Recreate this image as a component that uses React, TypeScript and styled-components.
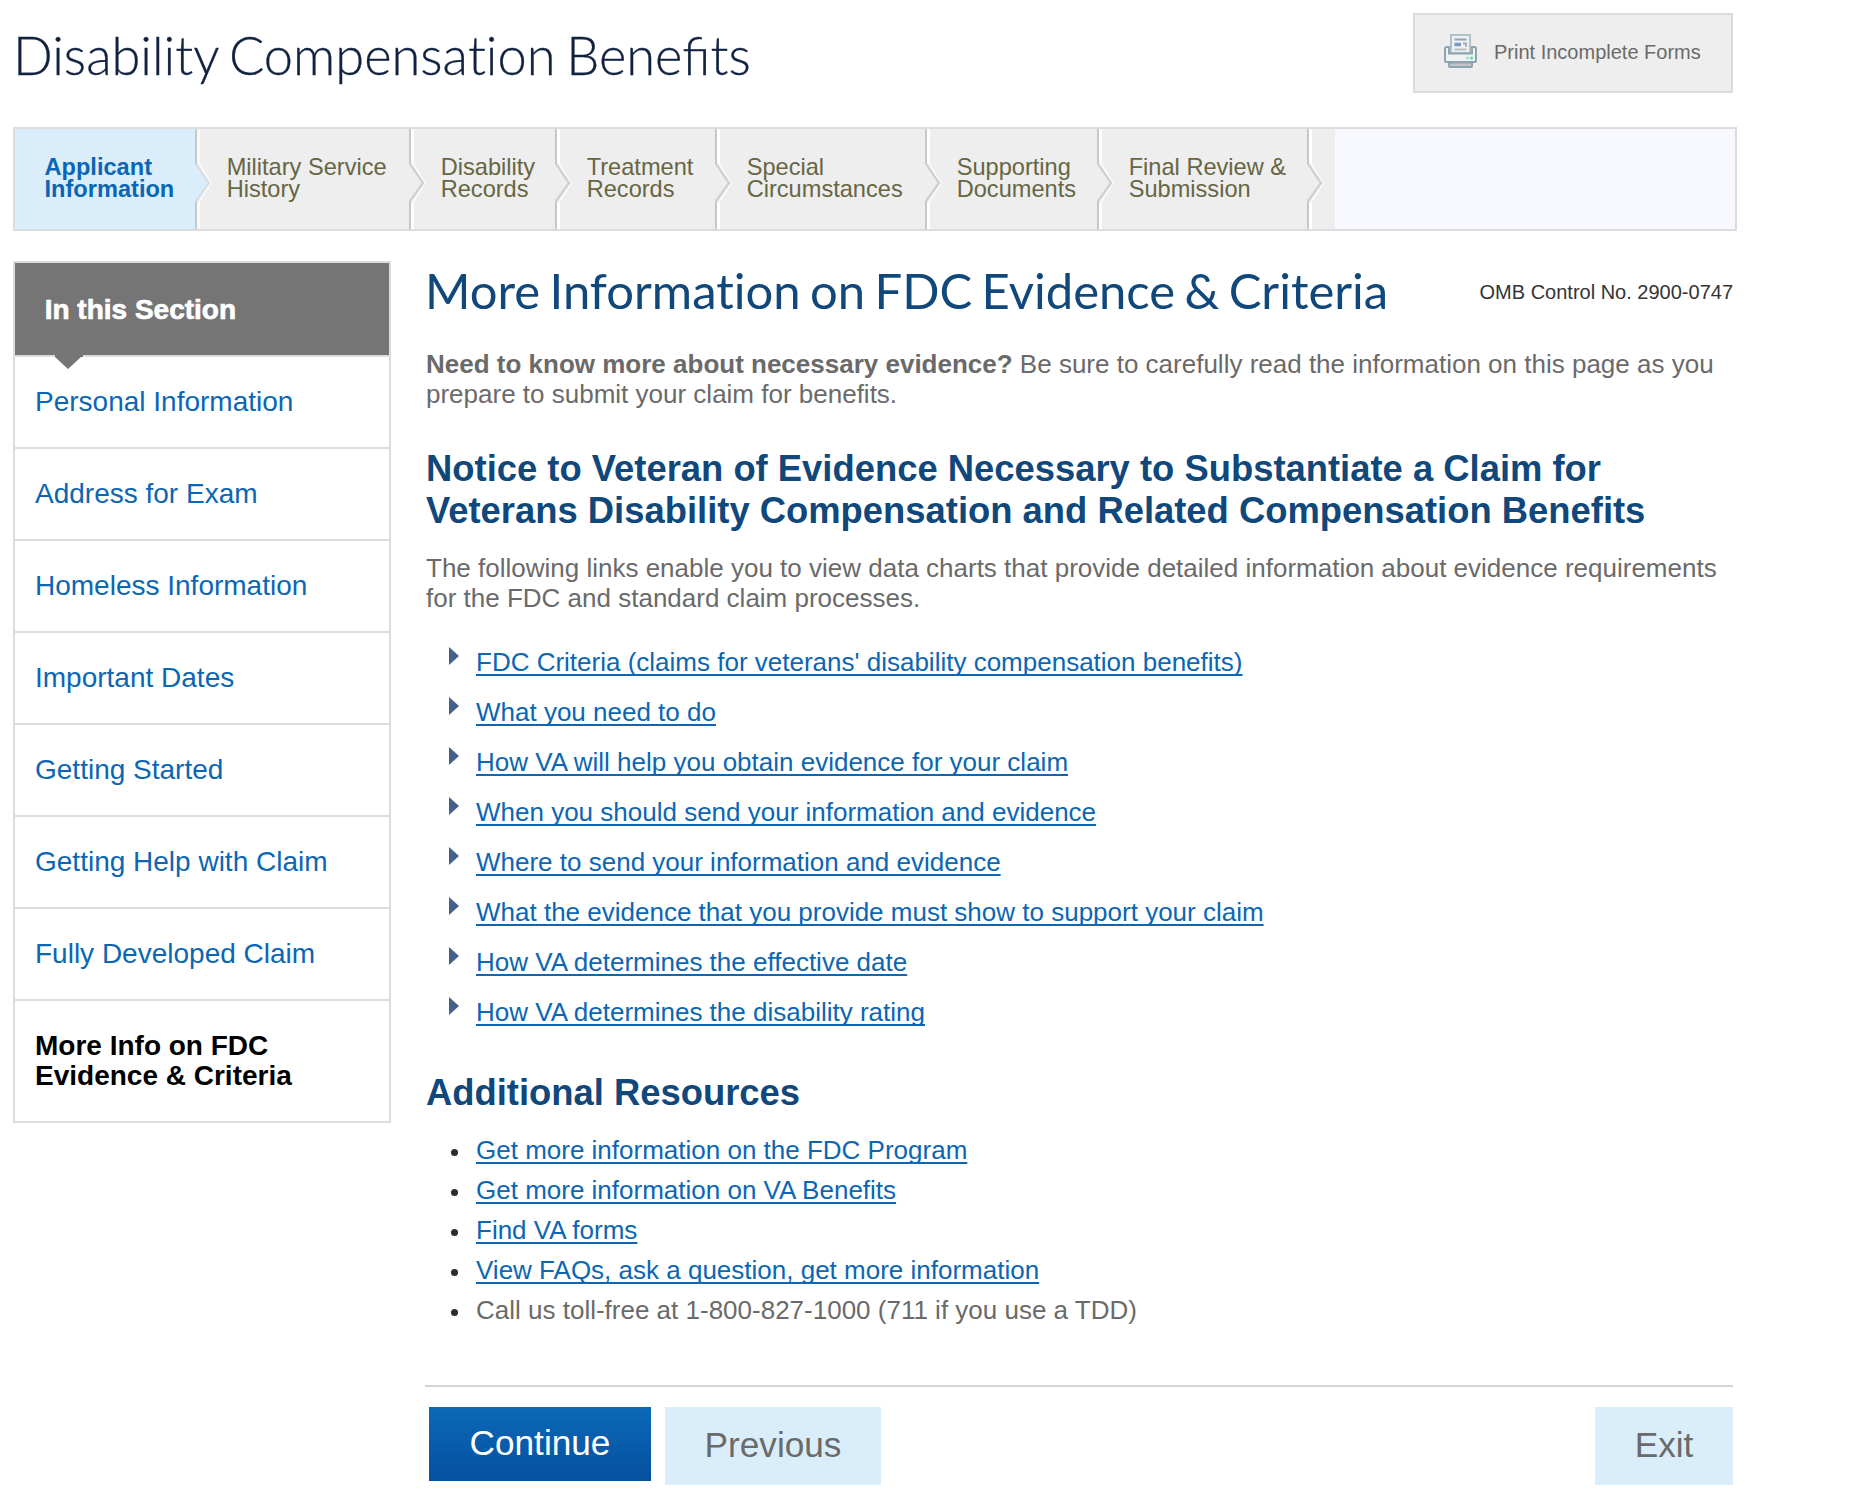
import React from "react";
import styled, { createGlobalStyle, css } from "styled-components";

const color = {
  line: "#dcdcdc",
  panel: "#eeeeee",
  sky: "#daedfb",
  link: "#0b66b4",
  text: "#6a6a6a",
  navy: "#10487b",
};

const sans = '"Liberation Sans", Arial, sans-serif';
const display = 'Lato, "Liberation Sans", sans-serif';

const GlobalStyle = createGlobalStyle`
  * { box-sizing: border-box; }
  body { margin: 0; background: #fff; font-family: ${sans}; color: ${color.text}; }
  h1, h2, h3, p, ul { margin: 0; padding: 0; font-size: inherit; font-weight: inherit; }
  ul { list-style: none; }
`;

const Page = styled.div`
  width: 1737px;
  padding: 13px 0 18px 13px;
`;

const Header = styled.header`
  display: flex;
  justify-content: space-between;
  height: 80px;
  margin-right: 4px;
`;

const Title = styled.h1`
  padding-top: 2px;
  font: 300 52.4px/80px ${display};
  word-spacing: -3.5px;
  color: #10223f;
  -webkit-text-stroke: 0.3px #10223f;
`;

const Plain = styled.span`
  font-variant-ligatures: none;
`;

const PrintButton = styled.a`
  display: flex;
  align-items: center;
  gap: 17px;
  width: 320px;
  padding: 0 0 2px 29px;
  border: 2px solid ${color.line};
  background: ${color.panel};
  font-size: 20px;
  line-height: 24px;
`;

const PrinterSvg = styled.svg`
  display: block;
  margin-bottom: 2px;
`;

const Steps = styled.nav`
  display: flex;
  height: 104px;
  margin-top: 34px;
  border: 2px solid ${color.line};
  background: #f8f9ff;
`;

const Step = styled.div<{ $width: number; $active?: boolean }>`
  flex: none;
  display: flex;
  width: ${(p) => p.$width}px;
  background: ${(p) => (p.$active ? color.sky : color.panel)};
  color: ${(p) => (p.$active ? color.link : "#666644")};
  font-size: 23.6px;
  font-weight: ${(p) => (p.$active ? 700 : 400)};
  line-height: 22px;
  white-space: pre-line;
`;

const StepLabel = styled.span<{ $first?: boolean }>`
  padding: 27px 0 0 ${(p) => (p.$first ? 29.5 : 13.7)}px;
`;

const StepsEnd = styled.div`
  width: 28px;
  background: ${color.panel};
`;

const Columns = styled.div`
  display: flex;
  align-items: flex-start;
  gap: 34px;
  margin: 30px 4px 0 0;
`;

const Sidebar = styled.aside`
  flex: none;
  width: 378px;
  border: 2px solid ${color.line};
  font-size: 28px;
  line-height: 30px;
`;

const SidebarHead = styled.h2`
  position: relative;
  height: 92px;
  padding: 32px 0 0 29.7px;
  background: #757575;
  color: #fff;
  font-weight: 700;
  -webkit-text-stroke: 0.7px #fff;
  &::after {
    content: "";
    position: absolute;
    left: 40px;
    top: 100%;
    width: 28px;
    height: 14px;
    background: #757575;
    clip-path: polygon(0 0, 100% 0, 100% 2px, 26px 2px, 13px 100%, 0 2px);
  }
`;

const SidebarItem = styled.a<{ $current?: boolean }>`
  display: block;
  padding: 30px 60px 30px 20px;
  border-top: 2px solid ${color.line};
  color: ${color.link};
  ${(p) =>
    p.$current &&
    css`
      color: #000;
      font-weight: 700;
    `}
`;

const Main = styled.main`
  flex: 1;
  font-size: 26px;
  line-height: 30px;
`;

const Headline = styled.div`
  display: flex;
  justify-content: space-between;
  height: 58px;
  margin-bottom: 30px;
`;

const PageTitle = styled.h2`
  font: 400 49px/58px ${display};
  font-variant-ligatures: none;
  word-spacing: -3.2px;
  color: ${color.navy};
`;

const ControlNumber = styled.span`
  padding-top: 19px;
  font-size: 20px;
  line-height: 24px;
  color: #333;
`;

const Paragraph = styled.p`
  padding-left: 1px;
`;

const SubHeading = styled.h3<{ $top: number }>`
  margin: ${(p) => p.$top}px 0 21px;
  padding-left: 1px;
  font-size: 36.4px;
  font-weight: 700;
  line-height: 42px;
  color: ${color.navy};
`;

const Link = styled.a`
  color: ${color.link};
  text-decoration: underline;
  text-decoration-thickness: 2px;
  text-underline-offset: 3px;
  text-decoration-skip-ink: none;
`;

const TopicList = styled.ul`
  display: flex;
  flex-direction: column;
  gap: 20px;
  margin-top: 34px;
`;

const Topic = styled.li`
  display: flex;
  gap: 17px;
  padding-left: 24px;
  &::before {
    content: "";
    width: 10px;
    height: 18px;
    background: #44608f;
    clip-path: polygon(0 0, 100% 50%, 0 100%);
  }
`;

const ResourceList = styled.ul`
  display: flex;
  flex-direction: column;
  gap: 10px;
`;

const Resource = styled.li`
  display: flex;
  gap: 18px;
  padding-left: 26px;
  &::before {
    content: "";
    width: 7px;
    height: 7px;
    margin-top: 14px;
    border-radius: 50%;
    background: #2c2c2c;
  }
`;

const Actions = styled.footer`
  display: flex;
  align-items: flex-start;
  gap: 14px;
  margin-top: 60px;
  padding: 20px 0 0 4px;
  border-top: 2px solid #d4d4d4;
`;

const Button = styled.button<{ $width: number; $primary?: boolean; $end?: boolean }>`
  width: ${(p) => p.$width}px;
  height: ${(p) => (p.$primary ? 74 : 78)}px;
  margin: ${(p) => (p.$end ? "0 0 0 auto" : "0")};
  padding: 0 0 3px;
  border: 0;
  background: ${(p) => (p.$primary ? "linear-gradient(#0b69b8, #05509f)" : color.sky)};
  color: ${(p) => (p.$primary ? "#fff" : color.text)};
  font: 35.2px ${sans};
`;

const Printer = () => (
  <PrinterSvg width="33" height="34" viewBox="0 0 33 34">
    <path d="M1 15q0-2 2-2h27q2 0 2 2V27q0 1-1 1H2q-1 0-1-1z" fill="#f0f3f4" stroke="#8fa3b0" strokeWidth="2" />
    <path d="M7 1h19v18H7z" fill="#edf1f3" stroke="#b0c2cc" strokeWidth="2" />
    <path d="M5 13v6.500h23V13" stroke="#8fa3b0" strokeWidth="2" fill="none" />
    <path d="M10.500 5.500h12" stroke="#93a7b6" strokeWidth="2" />
    <path d="M10.500 10.500h6.500" stroke="#7f96bd" strokeWidth="3.500" />
    <path d="M19 9.500h3v3" stroke="#aaa9ab" strokeWidth="2" fill="none" />
    <path d="M10.500 15.500h12" stroke="#bcbcbc" strokeWidth="2" />
    <path d="M5 28.500h23v3.500q0 1-1 1H6q-1 0-1-1z" fill="#c0c5c8" stroke="#8fa3b0" strokeWidth="2" />
    <circle cx="23.500" cy="24" r="1.300" fill="#a3c4d6" />
    <circle cx="27.500" cy="24" r="1.500" fill="#4ee58a" />
  </PrinterSvg>
);

const Separator = ({ afterActive }: { afterActive?: boolean }) => (
  <svg width="18" height="100" viewBox="0 0 18 100">
    <path d="M3.500 0V34M3.500 74V100" stroke="#fff" strokeWidth="3" opacity={afterActive ? 0.6 : 1} />
    <path d="M3 33L16 54L3 75" stroke="#fff" strokeWidth="1.500" fill="none" opacity="0.700" />
    {afterActive && <path d="M0 34L14 54L0 72z" fill={color.sky} />}
    <path
      d="M1 35L14 54L1 72"
      stroke={afterActive ? "#d3d9dd" : "#cfcfcf"}
      strokeWidth={afterActive ? 1.5 : 2.2}
      fill="none"
    />
    <path d="M1 0V35M1 72V100" stroke="#c8c8c8" strokeWidth="2" />
  </svg>
);

const steps = [
  { label: "Applicant\nInformation", width: 180 },
  { label: "Military Service\nHistory", width: 214 },
  { label: "Disability\nRecords", width: 146 },
  { label: "Treatment\nRecords", width: 160 },
  { label: "Special\nCircumstances", width: 210 },
  { label: "Supporting\nDocuments", width: 172 },
  { label: "Final Review &\nSubmission", width: 210 },
];

const sections = [
  "Personal Information",
  "Address for Exam",
  "Homeless Information",
  "Important Dates",
  "Getting Started",
  "Getting Help with Claim",
  "Fully Developed Claim",
  "More Info on FDC Evidence & Criteria",
];

const topics = [
  "FDC Criteria (claims for veterans' disability compensation benefits)",
  "What you need to do",
  "How VA will help you obtain evidence for your claim",
  "When you should send your information and evidence",
  "Where to send your information and evidence",
  "What the evidence that you provide must show to support your claim",
  "How VA determines the effective date",
  "How VA determines the disability rating",
];

const resources = [
  "Get more information on the FDC Program",
  "Get more information on VA Benefits",
  "Find VA forms",
  "View FAQs, ask a question, get more information",
];

export default function App() {
  return (
    <>
      <GlobalStyle />
      <Page>
        <Header>
          <Title>
            Disability Compensa<Plain>ti</Plain>on Benefits
          </Title>
          <PrintButton>
            <Printer />
            Print Incomplete Forms
          </PrintButton>
        </Header>
        <Steps>
          {steps.map((step, i) => (
            <Step key={step.label} $width={step.width} $active={i === 0}>
              {i > 0 && <Separator afterActive={i === 1} />}
              <StepLabel $first={i === 0}>{step.label}</StepLabel>
            </Step>
          ))}
          <StepsEnd>
            <Separator />
          </StepsEnd>
        </Steps>
        <Columns>
          <Sidebar>
            <SidebarHead>In this Section</SidebarHead>
            {sections.map((name, i) => (
              <SidebarItem key={name} $current={i === sections.length - 1}>
                {name}
              </SidebarItem>
            ))}
          </Sidebar>
          <Main>
            <Headline>
              <PageTitle>More Information on FDC Evidence &amp; Criteria</PageTitle>
              <ControlNumber>OMB Control No. 2900-0747</ControlNumber>
            </Headline>
            <Paragraph>
              <strong>Need to know more about necessary evidence?</strong> Be sure to carefully read the
              information on this page as you prepare to submit your claim for benefits.
            </Paragraph>
            <SubHeading $top={39}>
              Notice to Veteran of Evidence Necessary to Substantiate a Claim for Veterans Disability
              Compensation and Related Compensation Benefits
            </SubHeading>
            <Paragraph>
              The following links enable you to view data charts that provide detailed information about
              evidence requirements for the FDC and standard claim processes.
            </Paragraph>
            <TopicList>
              {topics.map((topic) => (
                <Topic key={topic}>
                  <Link>{topic}</Link>
                </Topic>
              ))}
            </TopicList>
            <SubHeading $top={45}>Additional Resources</SubHeading>
            <ResourceList>
              {resources.map((resource) => (
                <Resource key={resource}>
                  <Link>{resource}</Link>
                </Resource>
              ))}
              <Resource>Call us toll-free at 1-800-827-1000 (711 if you use a TDD)</Resource>
            </ResourceList>
            <Actions>
              <Button $width={222} $primary>
                Continue
              </Button>
              <Button $width={216}>Previous</Button>
              <Button $width={138} $end>
                Exit
              </Button>
            </Actions>
          </Main>
        </Columns>
      </Page>
    </>
  );
}
